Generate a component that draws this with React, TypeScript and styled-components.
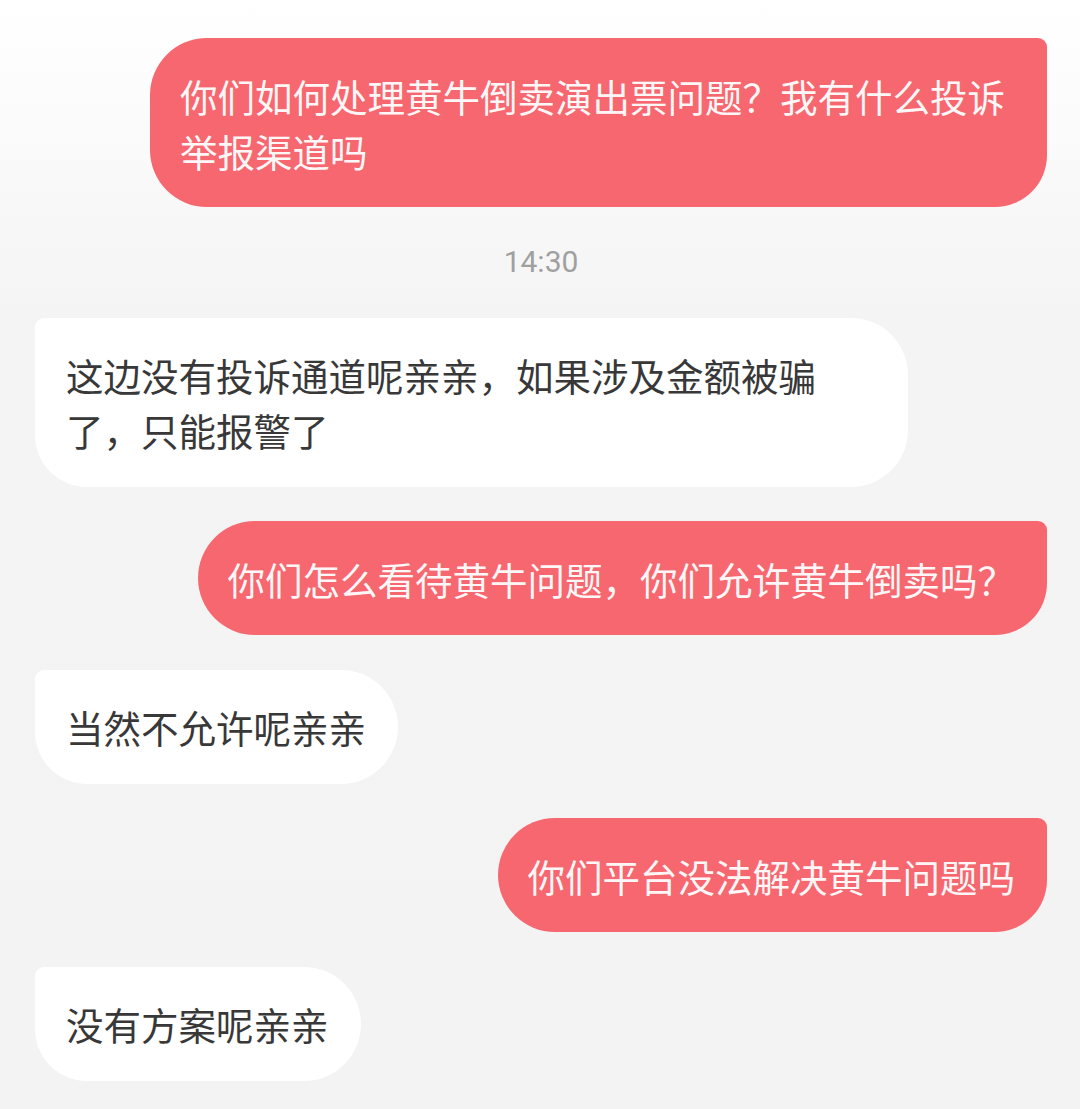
import React from "react";
import styled, { createGlobalStyle, css } from "styled-components";

const GlobalStyle = createGlobalStyle`
  html, body {
    margin: 0;
    padding: 0;
    background: #f3f3f3;
  }
  body {
    font-family: "Noto Sans CJK SC", "Noto Sans", sans-serif;
  }
`;

const Screen = styled.div`
  min-height: 1109px;
  box-sizing: border-box;
  background: linear-gradient(180deg, #ffffff 0px, #fbfbfb 120px, #f4f4f4 320px, #f3f3f3 100%);
  padding: 38px 33px 26px 35px;
  display: flex;
  flex-direction: column;
`;

const Row = styled.div<{ $side: "left" | "right" }>`
  display: flex;
  justify-content: ${(p) => (p.$side === "right" ? "flex-end" : "flex-start")};
  margin-bottom: 34.5px;
`;

const Bubble = styled.div<{ $side: "left" | "right"; $full?: boolean }>`
  box-sizing: border-box;
  font-family: "Noto Sans CJK SC", "Noto Sans", sans-serif;
  font-size: 37.5px;
  line-height: 55px;
  padding: 29.5px 32px 29.5px 30px;
  ${(p) =>
    p.$side === "right"
      ? css`
          max-width: 897px;
          background: #f6676f;
          color: #fff7f7;
          border-radius: 57px 9px 52px 57px;
        `
      : css`
          max-width: 873px;
          background: #ffffff;
          color: #383838;
          border-radius: 9px 57px 57px 52px;
          padding-left: 31px;
        `}
  ${(p) =>
    p.$full &&
    css`
      width: 873px;
    `}
`;

const Time = styled.div`
  text-align: center;
  font-family: Roboto, "Noto Sans", sans-serif;
  font-size: 30px;
  line-height: 40px;
  color: #a0a0a0;
  margin: 0.5px 0 35.5px 0;
`;

export default function App() {
  return (
    <>
      <GlobalStyle />
      <Screen>
        <Row $side="right">
          <Bubble $side="right">你们如何处理黄牛倒卖演出票问题？我有什么投诉举报渠道吗</Bubble>
        </Row>
        <Time>14:30</Time>
        <Row $side="left">
          <Bubble $side="left" $full>
            这边没有投诉通道呢亲亲，如果涉及金额被骗
            <br />
            了，只能报警了
          </Bubble>
        </Row>
        <Row $side="right">
          <Bubble $side="right">你们怎么看待黄牛问题，你们允许黄牛倒卖吗？</Bubble>
        </Row>
        <Row $side="left">
          <Bubble $side="left">当然不允许呢亲亲</Bubble>
        </Row>
        <Row $side="right">
          <Bubble $side="right">你们平台没法解决黄牛问题吗</Bubble>
        </Row>
        <Row $side="left">
          <Bubble $side="left">没有方案呢亲亲</Bubble>
        </Row>
      </Screen>
    </>
  );
}
